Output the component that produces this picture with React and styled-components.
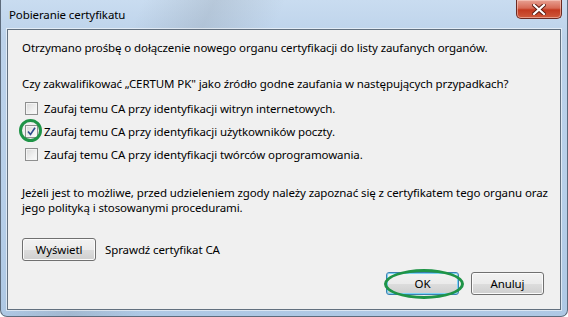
import React from "react";
import styled, { createGlobalStyle } from "styled-components";

const GlobalStyle = createGlobalStyle`
  html, body {
    margin: 0;
    padding: 0;
    background: #ffffff;
  }
  body {
    font-family: "Noto Sans", "Liberation Sans", sans-serif;
    font-size: 11.5px;
    letter-spacing: -0.1px;
    color: #000;
  }
`;

const options = [
  { label: "Zaufaj temu CA przy identyfikacji witryn internetowych.", checked: false },
  { label: "Zaufaj temu CA przy identyfikacji użytkowników poczty.", checked: true },
  { label: "Zaufaj temu CA przy identyfikacji twórców oprogramowania.", checked: false },
];

const App = () => {
  return (
    <>
      <GlobalStyle />
      <Window>
        <TitleBar>
          <Title>Pobieranie certyfikatu</Title>
          <CloseButton>
            <svg width="14" height="11" viewBox="0 0 14 11">
              <path
                d="M2 1 L12 10 M12 1 L2 10"
                stroke="#5a1a10"
                strokeWidth="4"
                strokeLinecap="square"
              />
              <path
                d="M2 1 L12 10 M12 1 L2 10"
                stroke="#ffffff"
                strokeWidth="2.2"
                strokeLinecap="square"
              />
            </svg>
          </CloseButton>
        </TitleBar>
        <Client>
          <Text $top={10}>
            Otrzymano prośbę o dołączenie nowego organu certyfikacji do listy zaufanych organów.
          </Text>
          <Text $top={21}>
            Czy zakwalifikować „CERTUM PK" jako źródło godne zaufania w następujących przypadkach?
          </Text>
          {options.map((opt, i) => (
            <OptionRow key={i} $top={i === 0 ? 9 : 7}>
              <CheckBox>
                {opt.checked ? (
                  <svg width="9" height="9" viewBox="0 0 9 9">
                    <path
                      d="M1 4.5 L3.5 7.5 L8 0.8"
                      fill="none"
                      stroke="#2c4a8c"
                      strokeWidth="1.6"
                    />
                  </svg>
                ) : null}
              </CheckBox>
              <span>{opt.label}</span>
            </OptionRow>
          ))}
          <Text $top={23}>
            Jeżeli jest to możliwe, przed udzieleniem zgody należy zapoznać się z certyfikatem tego organu oraz
            <br />
            jego polityką i stosowanymi procedurami.
          </Text>
          <ViewRow>
            <Button $width={74}>Wyświetl</Button>
            <span>Sprawdź certyfikat CA</span>
          </ViewRow>
          <Footer>
            <Button $width={73} $default>
              OK
            </Button>
            <Button $width={73}>Anuluj</Button>
          </Footer>
        </Client>
        <Mark $x={18} $y={119} $w={23} $h={23} />
        <Mark $x={383} $y={269} $w={80} $h={30} />
      </Window>
    </>
  );
};

export default App;

const Window = styled.div`
  position: relative;
  width: 568px;
  height: 317px;
  box-sizing: border-box;
  display: flex;
  flex-direction: column;
  padding: 0 6px 6px 6px;
  border: 1px solid #5d6b7c;
  border-top: none;
  border-radius: 0 0 7px 7px;
  background:
    linear-gradient(115deg, rgba(255, 255, 255, 0) 20%, rgba(120, 130, 140, 0.22) 30%, rgba(255, 255, 255, 0) 40%),
    linear-gradient(180deg, #c9dcf0 0%, #bcd2ea 12%, #b7cfe9 60%, #aec8e4 100%);
  overflow: hidden;
`;

const TitleBar = styled.div`
  height: 29px;
  display: flex;
  align-items: flex-start;
  justify-content: space-between;
`;

const Title = styled.div`
  padding-top: 7px;
  padding-left: 2px;
  color: #000;
`;

const CloseButton = styled.div`
  width: 46px;
  height: 19px;
  margin-right: -1px;
  box-sizing: border-box;
  display: flex;
  align-items: center;
  justify-content: center;
  border: 1px solid #6b2a22;
  border-top: none;
  border-radius: 0 0 5px 5px;
  background: linear-gradient(180deg, #e8a193 0%, #d76a55 45%, #c3391f 55%, #cf5a3c 100%);
  box-shadow: inset 0 0 0 1px rgba(255, 220, 210, 0.5);
`;

const Client = styled.div`
  flex: 1;
  display: flex;
  flex-direction: column;
  background: #f0f0f0;
  border: 1px solid #62707f;
  padding: 0 16px 0 14px;
  box-shadow: 0 0 0 1px rgba(255, 255, 255, 0.55);
`;

const Text = styled.div`
  margin-top: ${(p) => p.$top}px;
  line-height: 15px;
  white-space: nowrap;
`;

const OptionRow = styled.div`
  margin-top: ${(p) => p.$top}px;
  height: 16px;
  display: flex;
  align-items: center;
  gap: 6px;
  padding-left: 3px;
  white-space: nowrap;
`;

const CheckBox = styled.div`
  width: 13px;
  height: 13px;
  box-sizing: border-box;
  border: 1px solid #8e8f8f;
  background: linear-gradient(135deg, #d9d9d9 0%, #f0f0f0 60%, #fbfbfb 100%);
  box-shadow: inset 0 0 0 1px #f4f4f4;
  display: flex;
  align-items: center;
  justify-content: center;
`;

const ViewRow = styled.div`
  margin-top: 23px;
  display: flex;
  align-items: center;
  gap: 9px;
`;

const Footer = styled.div`
  margin-top: 11px;
  display: flex;
  justify-content: flex-end;
  gap: 12px;
`;

const Button = styled.div`
  width: ${(p) => p.$width}px;
  height: 23px;
  box-sizing: border-box;
  display: flex;
  align-items: center;
  justify-content: center;
  border: 1px solid ${(p) => (p.$default ? "#3c7fb1" : "#707070")};
  border-radius: 3px;
  background: linear-gradient(180deg, #f2f2f2 0%, #ebebeb 50%, #dddddd 51%, #cfcfcf 100%);
  box-shadow: inset 0 0 0 1px ${(p) => (p.$default ? "#7ad3f5" : "#fbfbfb")};
`;

const Mark = styled.div`
  position: absolute;
  left: ${(p) => p.$x}px;
  top: ${(p) => p.$y}px;
  width: ${(p) => p.$w}px;
  height: ${(p) => p.$h}px;
  box-sizing: border-box;
  border: 3px solid #1f9447;
  border-radius: 50%;
  pointer-events: none;
`;
